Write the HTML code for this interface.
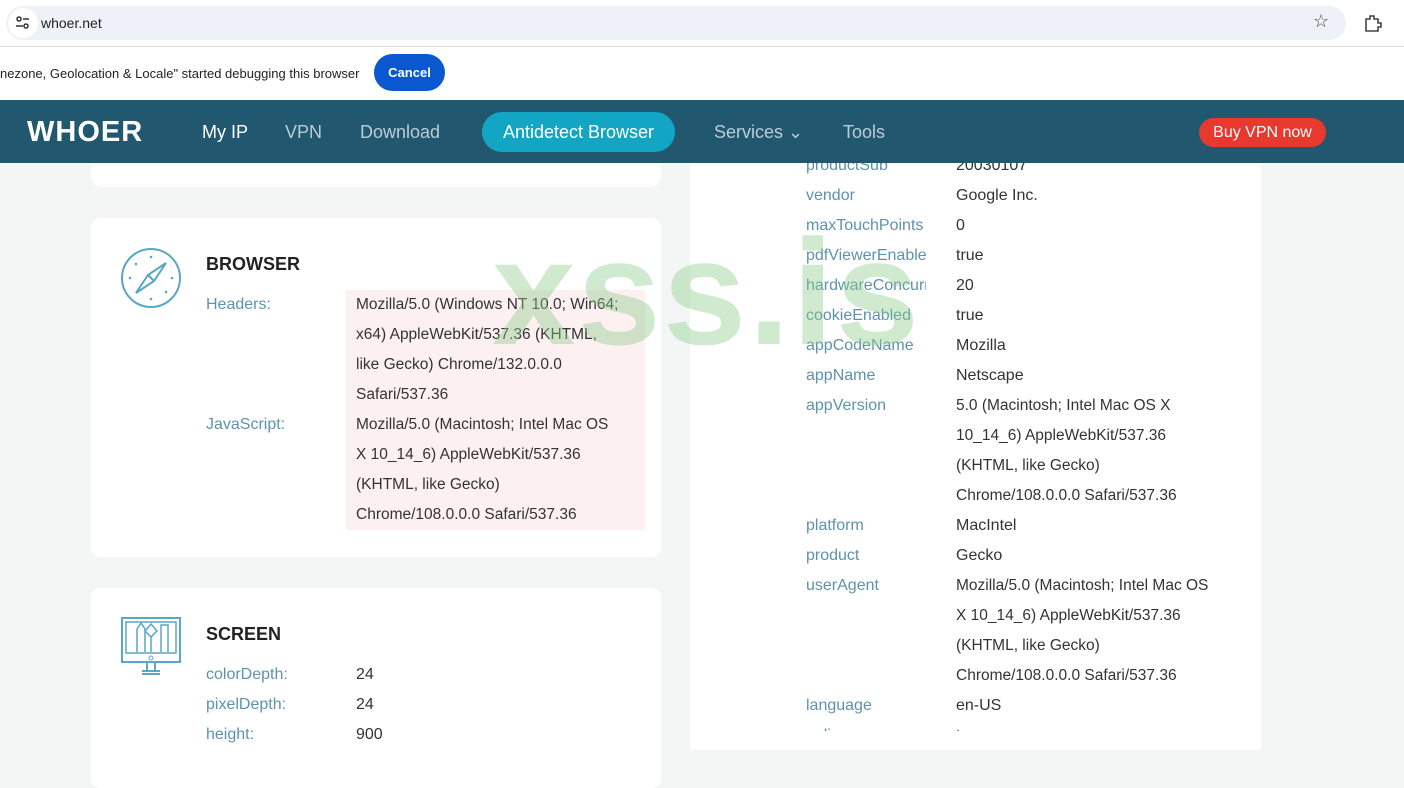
<!DOCTYPE html>
<html><head><style>
body{margin:0;width:1404px;height:731px;overflow:hidden;background:#f4f6f6;font-family:"Liberation Sans",sans-serif;position:relative}
.abs{position:absolute}
.addr{left:6px;top:6px;width:1340px;height:34px;background:#eef1f8;border-radius:17px}
.lbl{color:#5d93ad}
.val{color:#333}
.card{background:#fff;border-radius:10px;position:absolute}
.row{position:absolute;font-size:16px;line-height:30px;white-space:nowrap}
</style></head><body>
<div class="card" style="left:91px;top:150px;width:570px;height:37px;border-radius:0 0 10px 10px"></div>
<div class="card" style="left:91px;top:218px;width:570px;height:339px"></div>
<div class="card" style="left:91px;top:588px;width:570px;height:200px"></div>
<div class="card" style="left:690px;top:150px;width:571px;height:600px;border-radius:0"></div>

<div class="abs" style="left:0;top:0;width:1404px;height:46px;background:#fff"></div>
<div class="abs addr"></div>
<div class="abs" style="left:8px;top:8px;width:30px;height:30px;border-radius:15px;background:#fff"></div>
<svg class="abs" style="left:14px;top:14px" width="18" height="18"><circle cx="5" cy="5" r="2" fill="none" stroke="#333" stroke-width="1.5"/><line x1="9" y1="5" x2="15" y2="5" stroke="#333" stroke-width="1.5"/><circle cx="12" cy="12" r="2" fill="none" stroke="#333" stroke-width="1.5"/><line x1="2" y1="12" x2="9" y2="12" stroke="#333" stroke-width="1.5"/></svg>
<div class="abs" style="left:41px;top:15px;font-size:14px;color:#222">whoer.net</div>
<div class="abs" style="left:1313px;top:11px;font-size:18px;color:#444">☆</div>
<svg class="abs" style="left:1363px;top:13px" width="20" height="20"><path d="M3 6 H7 V3 H11 V6 H15 V10 H18 V14 H15 V18 H3 Z" fill="none" stroke="#444" stroke-width="1.6"/></svg>
<div class="abs" style="left:0;top:46px;width:1404px;height:54px;background:#fff;border-top:1px solid #ddd"></div>
<div class="abs" style="left:0;top:66px;font-size:13px;color:#222">nezone, Geolocation &amp; Locale" started debugging this browser</div>
<div class="abs" style="left:374px;top:54px;width:71px;height:37px;border-radius:19px;background:#0b57d0;color:#fff;font-size:13px;font-weight:bold;text-align:center;line-height:37px">Cancel</div>
<div class="abs" style="left:0;top:100px;width:1404px;height:63px;background:#215870"></div>
<div class="abs" style="left:27px;top:116px;font-size:29px;font-weight:bold;color:#fff;letter-spacing:1px">WHOER</div>
<div class="abs" style="left:202px;top:122px;font-size:18px;color:#fff">My IP</div>
<div class="abs" style="left:285px;top:122px;font-size:18px;color:#b9cdd6">VPN</div>
<div class="abs" style="left:360px;top:122px;font-size:18px;color:#b9cdd6">Download</div>
<div class="abs" style="left:482px;top:112px;width:193px;height:40px;border-radius:20px;background:#13a5c4;color:#fff;font-size:18px;text-align:center;line-height:40px">Antidetect Browser</div>
<div class="abs" style="left:714px;top:122px;font-size:18px;color:#b9cdd6">Services ⌄</div>
<div class="abs" style="left:843px;top:122px;font-size:18px;color:#b9cdd6">Tools</div>
<div class="abs" style="left:1199px;top:118px;width:127px;height:29px;border-radius:15px;background:#e8392f;color:#fff;font-size:16px;text-align:center;line-height:29px">Buy VPN now</div>

<svg class="abs" style="left:121px;top:248px" width="60" height="60"><circle cx="30" cy="30" r="29" fill="none" stroke="#5aa6c6" stroke-width="2"/><path d="M45 15 L33 33 L15 45 L27 27Z" fill="none" stroke="#5aa6c6" stroke-width="2"/><line x1="27" y1="27" x2="33" y2="33" stroke="#5aa6c6" stroke-width="2"/><g fill="#5aa6c6"><circle cx="30" cy="9" r="1.3"/><circle cx="30" cy="51" r="1.3"/><circle cx="9" cy="30" r="1.3"/><circle cx="51" cy="30" r="1.3"/><circle cx="15" cy="16" r="1.3"/><circle cx="45" cy="44" r="1.3"/></g></svg>
<div class="abs" style="left:206px;top:254px;font-size:18px;font-weight:bold;color:#222">BROWSER</div>
<div class="abs" style="left:346px;top:290px;width:299px;height:240px;background:#fdf0f0"></div>
<div class="row lbl" style="left:206px;top:290px">Headers:</div>
<div class="row lbl" style="left:206px;top:410px">JavaScript:</div>
<div class="row val" style="left:356px;top:290px;font-size:15.5px">Mozilla/5.0 (Windows NT 10.0; Win64;<br>x64) AppleWebKit/537.36 (KHTML,<br>like Gecko) Chrome/132.0.0.0<br>Safari/537.36</div>
<div class="row val" style="left:356px;top:410px;font-size:15.5px">Mozilla/5.0 (Macintosh; Intel Mac OS<br>X 10_14_6) AppleWebKit/537.36<br>(KHTML, like Gecko)<br>Chrome/108.0.0.0 Safari/537.36</div>

<svg class="abs" style="left:121px;top:617px" width="60" height="60"><rect x="1" y="1" width="58" height="44" fill="none" stroke="#5aa6c6" stroke-width="2"/><rect x="5" y="5" width="50" height="31" fill="none" stroke="#5aa6c6" stroke-width="1.5"/><path d="M16 35 V12 L20 6 L24 12 V35 M30 35 V20 L24 14 L30 7 L36 14 L30 20 M40 35 V8 H47 V35" fill="none" stroke="#5aa6c6" stroke-width="1.5"/><circle cx="30" cy="41" r="2" fill="none" stroke="#5aa6c6"/><path d="M26 45 V54 M34 45 V54 M21 57 H39 M21 54 H39" stroke="#5aa6c6" stroke-width="2"/></svg>
<div class="abs" style="left:206px;top:624px;font-size:18px;font-weight:bold;color:#222">SCREEN</div>
<div class="row lbl" style="left:206px;top:660px">colorDepth:</div><div class="row val" style="left:356px;top:660px">24</div>
<div class="row lbl" style="left:206px;top:690px">pixelDepth:</div><div class="row val" style="left:356px;top:690px">24</div>
<div class="row lbl" style="left:206px;top:720px">height:</div><div class="row val" style="left:356px;top:720px">900</div>

<div class="abs" style="left:806px;top:163px;width:120px;height:568px;overflow:hidden">
<div class="row lbl" style="left:0;top:-12px">productSub</div>
<div class="row lbl" style="left:0;top:18px">vendor</div>
<div class="row lbl" style="left:0;top:48px">maxTouchPoints</div>
<div class="row lbl" style="left:0;top:78px">pdfViewerEnabled</div>
<div class="row lbl" style="left:0;top:108px">hardwareConcurrency</div>
<div class="row lbl" style="left:0;top:138px">cookieEnabled</div>
<div class="row lbl" style="left:0;top:168px">appCodeName</div>
<div class="row lbl" style="left:0;top:198px">appName</div>
<div class="row lbl" style="left:0;top:228px">appVersion</div>
<div class="row lbl" style="left:0;top:348px">platform</div>
<div class="row lbl" style="left:0;top:378px">product</div>
<div class="row lbl" style="left:0;top:408px">userAgent</div>
<div class="row lbl" style="left:0;top:528px">language</div>
<div class="row lbl" style="left:0;top:558px">online</div>
</div>
<div class="abs" style="left:956px;top:163px;width:266px;height:568px;overflow:hidden">
<div class="row val" style="left:0;top:-12px">20030107</div>
<div class="row val" style="left:0;top:18px">Google Inc.</div>
<div class="row val" style="left:0;top:48px">0</div>
<div class="row val" style="left:0;top:78px">true</div>
<div class="row val" style="left:0;top:108px">20</div>
<div class="row val" style="left:0;top:138px">true</div>
<div class="row val" style="left:0;top:168px">Mozilla</div>
<div class="row val" style="left:0;top:198px">Netscape</div>
<div class="row val" style="left:0;top:228px;font-size:15.5px">5.0 (Macintosh; Intel Mac OS X<br>10_14_6) AppleWebKit/537.36<br>(KHTML, like Gecko)<br>Chrome/108.0.0.0 Safari/537.36</div>
<div class="row val" style="left:0;top:348px">MacIntel</div>
<div class="row val" style="left:0;top:378px">Gecko</div>
<div class="row val" style="left:0;top:408px;font-size:15.5px">Mozilla/5.0 (Macintosh; Intel Mac OS<br>X 10_14_6) AppleWebKit/537.36<br>(KHTML, like Gecko)<br>Chrome/108.0.0.0 Safari/537.36</div>
<div class="row val" style="left:0;top:528px">en-US</div>
<div class="row val" style="left:0;top:558px">true</div>
</div>
<div class="abs" style="left:492px;top:212px;font-size:150px;font-weight:bold;color:rgba(140,205,140,0.42);letter-spacing:2px;line-height:160px">xss.is</div>
</body></html>
